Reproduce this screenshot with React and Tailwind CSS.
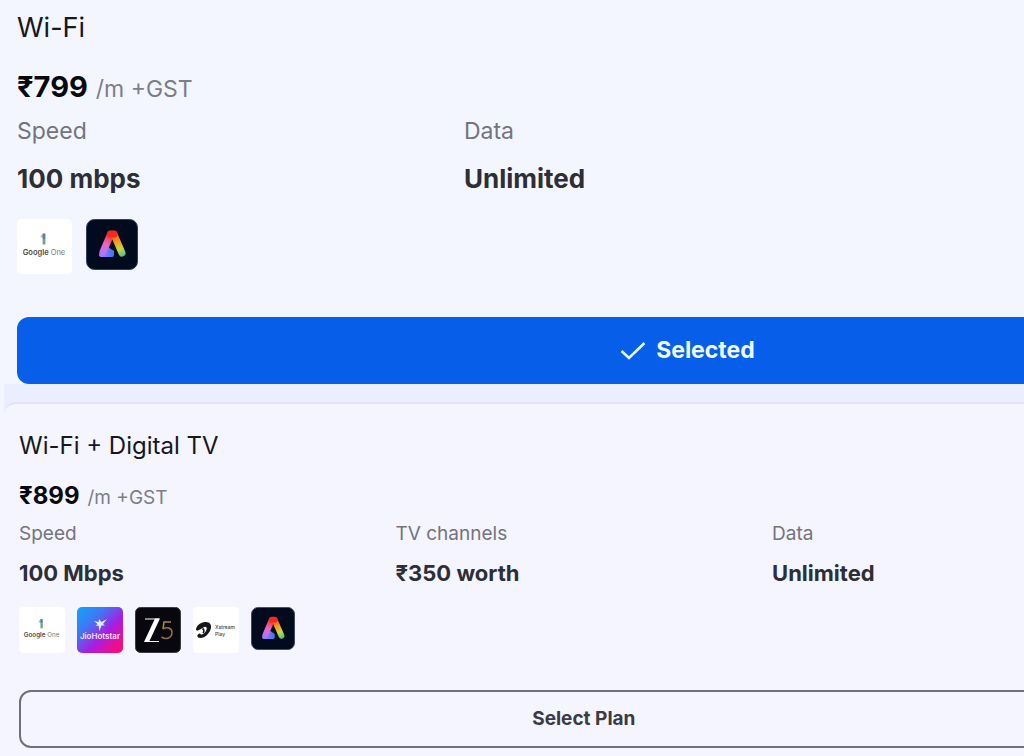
import { useId, useState } from "react";

const GoogleOneIcon = () => (
  <svg viewBox="0 0 55 55" role="img" aria-label="Google One" className="size-full">
    <rect width="55" height="55" rx="5" fill="#ffffff" />
    <path d="M24 18 L27 15.500" stroke="#e0b45c" strokeWidth="2.200" />
    <path d="M27 14.500 V20" stroke="#4c80a8" strokeWidth="2.800" />
    <path d="M27 20 V25.500" stroke="#6fa58c" strokeWidth="2.800" />
    <text x="27" y="36" textAnchor="middle" fontSize="7.500" fill="#4b4b4b" fontFamily="Inter, sans-serif">
      <tspan fontWeight="600">Google</tspan>
      <tspan fill="#777777"> One</tspan>
    </text>
  </svg>
);

const AdobeExpressIcon = () => {
  const id = useId();
  return (
    <svg viewBox="0 0 52 51" role="img" aria-label="Adobe Express" className="size-full">
      <defs>
        <linearGradient id={`${id}l`} gradientUnits="userSpaceOnUse" x1="15" y1="36" x2="26" y2="12">
          <stop offset="0" stopColor="#a878fa" />
          <stop offset="0.450" stopColor="#ea66c6" />
          <stop offset="0.800" stopColor="#f5383c" />
          <stop offset="1" stopColor="#f52a1c" />
        </linearGradient>
        <linearGradient id={`${id}r`} gradientUnits="userSpaceOnUse" x1="27" y1="12" x2="37" y2="36">
          <stop offset="0" stopColor="#f52a1c" />
          <stop offset="0.450" stopColor="#f79a1e" />
          <stop offset="0.750" stopColor="#c5d845" />
          <stop offset="1" stopColor="#5fc483" />
        </linearGradient>
        <linearGradient id={`${id}b`} gradientUnits="userSpaceOnUse" x1="14" y1="0" x2="27" y2="0">
          <stop offset="0" stopColor="#a878fa" />
          <stop offset="1" stopColor="#3f78f2" />
        </linearGradient>
      </defs>
      <rect x="0.500" y="0.500" width="51" height="50" rx="8" fill="#020a1e" stroke="#34405c" />
      <path d="M17 28 H22 L28 32 V36 Q28 38 26 38 H16 Q12 38 13.500 34 Z" fill={`url(#${id}b)`} />
      <path d="M17 33 L24.500 15.500" stroke={`url(#${id}l)`} strokeWidth="7" strokeLinecap="round" />
      <path d="M28 15.500 L36 34" stroke={`url(#${id}r)`} strokeWidth="7" strokeLinecap="round" />
      <path d="M24.500 15 L28 15.010" stroke="#f52a1c" strokeWidth="7" strokeLinecap="round" />
    </svg>
  );
};

const JioHotstarIcon = () => {
  const id = useId();
  return (
    <svg viewBox="0 0 46 46" role="img" aria-label="JioHotstar" className="size-full">
      <defs>
        <linearGradient id={id} x1="0" y1="0" x2="1" y2="1">
          <stop offset="0" stopColor="#12a4f8" />
          <stop offset="0.300" stopColor="#3b7bf5" />
          <stop offset="0.600" stopColor="#a81de0" />
          <stop offset="0.850" stopColor="#ee0e8c" />
          <stop offset="1" stopColor="#fb0b72" />
        </linearGradient>
      </defs>
      <rect width="46" height="46" rx="5" fill={`url(#${id})`} />
      <path
        d="M17 14 L21.500 15 L22 12 L24.500 15 L30 12 L26 17 L28 18.500 L24.500 18.500 L22.500 24 L21.500 18.500 L18.500 19 L20.500 17 Z"
        fill="#d9f0ff"
      />
      <text
        x="23"
        y="32"
        textAnchor="middle"
        fontSize="8"
        fontWeight="600"
        fill="#f3e3ff"
        fontFamily="Inter, sans-serif"
      >
        JioHotstar
      </text>
    </svg>
  );
};

const Zee5Icon = () => (
  <svg viewBox="0 0 46 46" role="img" aria-label="ZEE5" className="size-full">
    <rect x="0.500" y="0.500" width="45" height="45" rx="5" fill="#07070d" stroke="#3b3b42" />
    <path d="M10 12 H24 M10 34.500 H24" stroke="#ffffff" strokeWidth="1.200" />
    <path d="M20 11.500 H25 L14 35 H9 Z" fill="#ffffff" />
    <path d="M36 15 H29 L28 22" stroke="#a88a3c" strokeWidth="1.600" fill="none" />
    <path
      d="M28 22 C32 19.500 37 21 37 25.500 C37 31 31 33 26.500 30"
      stroke="#8f6a4c"
      strokeWidth="1.600"
      fill="none"
    />
  </svg>
);

const XstreamPlayIcon = () => (
  <svg viewBox="0 0 46 46" role="img" aria-label="Xstream Play" className="size-full">
    <rect width="46" height="46" rx="4" fill="#ffffff" />
    <path
      d="M3 22 C4 17.500 9 15 13 15 C17 15 18.500 18 18 21 C17 26 12 31 7.500 31 C3.500 31 3.500 27.500 6.500 26.500 C7.500 26.200 7.500 28 9 27.500 C12 26.500 14.500 22.500 13.500 20.500 C12 18 7.500 23.500 4.500 23.500 C3.500 23.500 2.800 23 3 22 Z"
      fill="#161616"
    />
    <path d="M9.500 21.500 C11 22.500 11.500 24 10 26" stroke="#161616" strokeWidth="1.600" fill="none" />
    <text fontSize="5" fontWeight="500" fill="#444444" fontFamily="Inter, sans-serif">
      <tspan x="22" y="22">Xstream</tspan>
      <tspan x="22" y="28.500">Play</tspan>
    </text>
  </svg>
);

const CheckIcon = () => (
  <svg viewBox="0 0 26 20" aria-hidden="true" className="w-[26px] h-5">
    <path d="M1.500 10 L9 17 L24.500 2" stroke="#e6f6ff" strokeWidth="2.600" fill="none" />
  </svg>
);

const plans = [
  {
    id: "wifi",
    name: "Wi-Fi",
    price: "₹799",
    details: [
      { label: "Speed", value: "100 mbps" },
      { label: "Data", value: "Unlimited" },
    ],
    apps: [GoogleOneIcon, AdobeExpressIcon],
  },
  {
    id: "wifi-tv",
    name: "Wi-Fi + Digital TV",
    price: "₹899",
    details: [
      { label: "Speed", value: "100 Mbps" },
      { label: "TV channels", value: "₹350 worth" },
      { label: "Data", value: "Unlimited" },
    ],
    apps: [GoogleOneIcon, JioHotstarIcon, Zee5Icon, XstreamPlayIcon, AdobeExpressIcon],
  },
];

// the first plan is shown a size larger than the add-on plan
const large = {
  card: "w-[133%] pl-[17px] pr-1 pt-2",
  title: "text-[27px] leading-10",
  priceRow: "mt-[19px] h-10 leading-10",
  price: "text-[29px]",
  unit: "text-[23px]",
  grid: "mt-1",
  label: "text-[23px] leading-10",
  value: "text-[26px] leading-10 mt-2",
  apps: "mt-5 gap-[14px]",
  tile: "size-[55px]",
  darkTile: "w-[52px] h-[51px]",
  button: "mt-[43px] h-[67px] text-[23px] rounded-xl",
};

const small = {
  card: "w-[113%] pl-[15px] pr-2 pt-6",
  title: "text-[24px] leading-9",
  priceRow: "mt-4 h-8 leading-8",
  price: "text-[24px]",
  unit: "text-[19px]",
  grid: "mt-1",
  label: "text-[19px] leading-9",
  value: "text-[22px] leading-9 mt-[3px]",
  apps: "mt-4 gap-3",
  tile: "size-[46px]",
  darkTile: "w-[44px] h-[43px]",
  button: "mt-[37px] h-[58px] text-[19px] rounded-xl",
};

function PlanCard({ plan, size, selected, onSelect }) {
  return (
    <div className={size.card}>
      <h2 className={`text-[#17181c] ${size.title}`}>{plan.name}</h2>

      <p className={`flex items-baseline gap-2 ${size.priceRow}`}>
        <span className={`font-bold text-[#08090c] ${size.price}`}>{plan.price}</span>
        <span className={`text-[#7c7d86] ${size.unit}`}>/m +GST</span>
      </p>

      <dl className={`grid grid-cols-3 ${size.grid}`}>
        {plan.details.map((item) => (
          <div key={item.label}>
            <dt className={`text-[#73747d] ${size.label}`}>{item.label}</dt>
            <dd className={`font-bold text-[#2d2e36] ${size.value}`}>{item.value}</dd>
          </div>
        ))}
      </dl>

      <div className={`flex ${size.apps}`}>
        {plan.apps.map((Icon, i) => (
          <div key={i} className={Icon === AdobeExpressIcon ? size.darkTile : size.tile}>
            <Icon />
          </div>
        ))}
      </div>

      <button
        type="button"
        aria-pressed={selected}
        onClick={() => onSelect(plan.id)}
        className={`flex w-full items-center justify-center gap-[10px] font-bold ${size.button} ${
          selected ? "bg-[#075fe9] text-[#effaff]" : "border-2 border-[#6f7078] text-[#3a3b43]"
        }`}
      >
        {selected && <CheckIcon />}
        {selected ? "Selected" : "Select Plan"}
      </button>
    </div>
  );
}

function App() {
  const [selectedPlan, setSelectedPlan] = useState("wifi");

  return (
    <main className="overflow-hidden bg-[#f4f6ff] font-['Inter','Noto_Sans',sans-serif]">
      {/* Wi-Fi only */}
      <PlanCard
        plan={plans[0]}
        size={large}
        selected={selectedPlan === "wifi"}
        onSelect={setSelectedPlan}
      />

      {/* Wi-Fi with TV */}
      <div className="ml-1 bg-[#ebeefe] pt-[18px]">
        <div className="rounded-tl-xl border-t-2 border-[#e5e0f5] bg-[#f4f5ff] pb-3">
          <PlanCard
            plan={plans[1]}
            size={small}
            selected={selectedPlan === "wifi-tv"}
            onSelect={setSelectedPlan}
          />
        </div>
      </div>
    </main>
  );
}

export default App;
